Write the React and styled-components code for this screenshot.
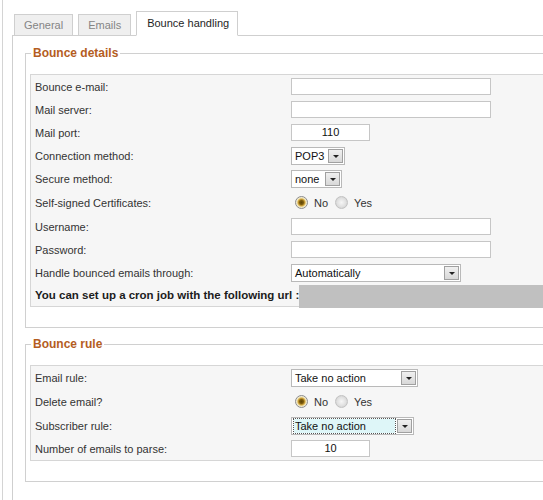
import React from "react";
import styled, { createGlobalStyle, css } from "styled-components";

const GlobalStyle = createGlobalStyle`
	html, body {
		margin: 0;
		padding: 0;
		background: #ffffff;
		overflow: hidden;
	}
	body {
		font-family: "Liberation Sans", Arial, sans-serif;
		font-size: 11px;
		color: #333;
	}
`;

const Frame = styled.div`
	margin-left: 2px;
	border-left: 1px solid #d4d4d4;
	min-height: 100vh;
	padding: 11px 0 0 9px;
	box-sizing: border-box;
	overflow: hidden;
`;

const TabBar = styled.div`
	display: flex;
	align-items: flex-end;
	gap: 5px;
	height: 25px;
	padding-left: 2px;
	margin-bottom: -1px;
	position: relative;
	z-index: 1;
`;

const Tab = styled.div`
	box-sizing: border-box;
	height: 22px;
	padding: 0 9px;
	display: flex;
	align-items: center;
	border: 1px solid #cfcfcf;
	background: #efefef;
	color: #858585;
	font-size: 11px;

	${(p) =>
		p.$active &&
		css`
			height: 25px;
			background: #ffffff;
			color: #1e1e1e;
			border-bottom-color: #ffffff;
			padding: 0 8px 1px 10px;
		`}
`;

const Panel = styled.div`
	width: 800px;
	min-height: 470px;
	border-top: 1px solid #cfcfcf;
	border-left: 1px solid #cfcfcf;
	background: #ffffff;
	padding: 10px 0 0 12px;
`;

const Group = styled.fieldset`
	margin: 0;
	width: 760px;
	border: 1px solid #d0d0d0;
	padding: 0 0 20px 4px;

	& + & {
		margin-top: 9px;
	}
`;

const Legend = styled.legend`
	padding: 0 2px;
	margin-left: 1px;
	font-size: 12px;
	line-height: 14px;
	font-weight: bold;
	color: #b45d1f;
`;

const FormTable = styled.div`
	margin-top: 14px;
	background: #f6f6f6;
	border: 1px solid #d6d6d6;
	padding-left: 4px;
`;

const Row = styled.div`
	display: grid;
	grid-template-columns: 256px 1fr;
	align-items: center;
	height: ${(p) => p.$h || 23}px;
`;

const Label = styled.div`
	color: #333;
	font-size: 11px;
`;

const Control = styled.div`
	display: flex;
	align-items: center;
`;

const TextInput = styled.div`
	box-sizing: border-box;
	width: ${(p) => p.$w}px;
	height: 17px;
	border: 1px solid #c6c6c6;
	background: #ffffff;
	color: #111;
	font-size: 11px;
	line-height: 15px;
	text-align: ${(p) => (p.$center ? "center" : "left")};
`;

const Select = styled.div`
	box-sizing: border-box;
	width: ${(p) => p.$w}px;
	height: 18px;
	border: 1px solid #b9b9b9;
	background: #ffffff;
	display: flex;
	align-items: center;
	justify-content: space-between;
	padding: 0 1px 0 2px;
	color: #111;
	font-size: 11px;
`;

const SelectValue = styled.span`
	flex: 1;
	height: 14px;
	line-height: 14px;
	padding-left: 1px;
	white-space: nowrap;

	${(p) =>
		p.$focused &&
		css`
			background: #def6f8;
			outline: 1px dotted #555;
			margin-right: 2px;
		`}
`;

const Arrow = styled.span`
	box-sizing: border-box;
	width: 15px;
	height: 14px;
	border: 1px solid #a0a0a0;
	background: linear-gradient(#f0f0f0, #d8d8d8);
	display: flex;
	align-items: center;
	justify-content: center;

	&::after {
		content: "";
		margin-top: 2px;
		border-left: 3px solid transparent;
		border-right: 3px solid transparent;
		border-top: 3px solid #222;
	}
`;

const RadioGroup = styled.div`
	display: flex;
	align-items: center;
	padding-left: 4px;
	color: #333;
	font-size: 11px;
`;

const Radio = styled.span`
	box-sizing: border-box;
	width: 13px;
	height: 13px;
	border-radius: 50%;
	border: 1px solid ${(p) => (p.$checked ? "#8c8c8c" : "#c2c2c2")};
	background: ${(p) =>
		p.$checked
			? "radial-gradient(circle, #5e4406 0, #7d5c0c 2px, #d6ab42 3.5px, #efe3b6 4.5px, #f4f4f4 6px)"
			: "radial-gradient(circle, #f6f6f6 0, #e2e2e2 4px, #d4d4d4 6px)"};
	margin-right: 6px;
`;

const RadioLabel = styled.span`
	margin-right: 7px;
`;

const CronRow = styled.div`
	display: flex;
	align-items: flex-start;
	height: 22px;
`;

const CronText = styled.span`
	font-size: 11.5px;
	font-weight: bold;
	color: #1c1c1c;
	line-height: 22px;
	white-space: nowrap;
`;

const Redacted = styled.span`
	flex: 1;
	height: 23px;
	margin-top: 1px;
	background: #c0c0c0;
`;

const YesNo = () => (
	<RadioGroup>
		<Radio $checked />
		<RadioLabel>No</RadioLabel>
		<Radio />
		<RadioLabel>Yes</RadioLabel>
	</RadioGroup>
);

const Dropdown = ({ value, width, focused }) => (
	<Select $w={width}>
		<SelectValue $focused={focused}>{value}</SelectValue>
		<Arrow />
	</Select>
);

export default function App() {
	return (
		<>
			<GlobalStyle />
			<Frame>
				<TabBar>
					<Tab>General</Tab>
					<Tab>Emails</Tab>
					<Tab $active>Bounce handling</Tab>
				</TabBar>
				<Panel>
					<Group>
						<Legend>Bounce details</Legend>
						<FormTable>
							<Row>
								<Label>Bounce e-mail:</Label>
								<Control><TextInput $w={200} /></Control>
							</Row>
							<Row>
								<Label>Mail server:</Label>
								<Control><TextInput $w={200} /></Control>
							</Row>
							<Row>
								<Label>Mail port:</Label>
								<Control><TextInput $w={79} $center>110</TextInput></Control>
							</Row>
							<Row>
								<Label>Connection method:</Label>
								<Control><Dropdown value="POP3" width={54} /></Control>
							</Row>
							<Row>
								<Label>Secure method:</Label>
								<Control><Dropdown value="none" width={51} /></Control>
							</Row>
							<Row $h={25}>
								<Label>Self-signed Certificates:</Label>
								<Control><YesNo /></Control>
							</Row>
							<Row>
								<Label>Username:</Label>
								<Control><TextInput $w={200} /></Control>
							</Row>
							<Row>
								<Label>Password:</Label>
								<Control><TextInput $w={200} /></Control>
							</Row>
							<Row>
								<Label>Handle bounced emails through:</Label>
								<Control><Dropdown value="Automatically" width={170} /></Control>
							</Row>
							<CronRow>
								<CronText>You can set up a cron job with the following url :</CronText>
								<Redacted />
							</CronRow>
						</FormTable>
					</Group>
					<Group>
						<Legend>Bounce rule</Legend>
						<FormTable>
							<Row>
								<Label>Email rule:</Label>
								<Control><Dropdown value="Take no action" width={127} /></Control>
							</Row>
							<Row $h={25}>
								<Label>Delete email?</Label>
								<Control><YesNo /></Control>
							</Row>
							<Row>
								<Label>Subscriber rule:</Label>
								<Control><Dropdown value="Take no action" width={123} focused /></Control>
							</Row>
							<Row>
								<Label>Number of emails to parse:</Label>
								<Control><TextInput $w={79} $center>10</TextInput></Control>
							</Row>
						</FormTable>
					</Group>
				</Panel>
			</Frame>
		</>
	);
}
